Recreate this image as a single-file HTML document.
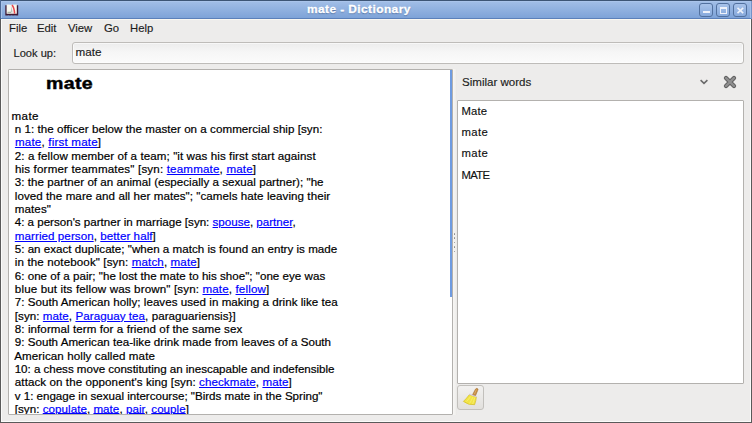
<!DOCTYPE html>
<html><head><meta charset="utf-8">
<style>
*{margin:0;padding:0;box-sizing:border-box}
html,body{width:752px;height:423px;overflow:hidden;background:#edeceb;font-family:"Liberation Sans",sans-serif;color:#1a1a1a}
.abs{position:absolute}
#frame{position:absolute;left:0;top:0;width:752px;height:423px;border-left:1px solid #5a5a5a;border-right:1px solid #5a5a5a;border-bottom:1px solid #5a5a5a;border-top:1px solid #3d5575;box-shadow:inset 1px 0 #fbfbfa,inset -1px 0 #fbfbfa,inset 0 -1px #fbfbfa}
#title{position:absolute;left:1px;top:1px;width:750px;height:18px;background:linear-gradient(#b3cbef 0,#a0bde6 1px,#7ea3d8 100%);border-bottom:1px solid #5b80ba;box-shadow:inset 1px 0 #a9c3ea,inset -1px 0 #a4bfe8}
#tl{position:absolute;left:0;top:0;width:1px;height:19px;background:#4d6a96}
#tr{position:absolute;left:751px;top:1px;width:1px;height:18px;background:#7193c8}
#title .t{position:absolute;left:306px;top:2px;color:#fff;font-weight:bold;font-size:10.9px;letter-spacing:0.4px;-webkit-text-stroke:0.3px #fff;text-shadow:0 1px 1px rgba(40,70,120,.6);transform:scaleX(1.09);transform-origin:0 0;white-space:nowrap}
.wb{position:absolute;top:2px;width:14px;height:14px;border:1px solid #52719f;border-radius:3px;background:linear-gradient(#a8c3ea,#86a9dc)}
#menu{position:absolute;left:2px;top:19px;width:748px;height:19px;border-top:1px solid #f9f7f1}
#menu span{position:absolute;top:1.6px;font-size:11.3px;color:#1c1c1c;-webkit-text-stroke:0.15px #1c1c1c}
.lbl{font-size:11.3px;color:#1c1c1c;-webkit-text-stroke:0.15px #1c1c1c}
#entry{position:absolute;left:72px;top:42px;width:672px;height:22px;border:1px solid #bebcb9;border-radius:3px;background:linear-gradient(#ececec,#f6f6f6 45%,#fbfbfb);box-shadow:inset 0 0 0 1px rgba(255,255,255,.6)}
#def{position:absolute;left:8px;top:69px;width:445px;height:346px;background:#fff;border:1px solid #b3b1ae;overflow:hidden;border-radius:1px}
#defblue{position:absolute;left:450px;top:70px;width:2px;height:227px;background:#6f9be0}
#handle{position:absolute;left:453px;top:69px;width:4px;height:346px;background:linear-gradient(90deg,#f7f6f4,#f1f0ee 60%,#e9e8e6)}
.dot{position:absolute;left:453.8px;width:1.5px;height:1.5px;background:#8a8a8a;border-radius:0.75px}
#deftxt{position:absolute;left:2.5px;top:38.7px;font-size:11.6px;line-height:13.33px;white-space:pre;color:#000;letter-spacing:0.03px;-webkit-text-stroke:0.2px #000}
.u a{text-underline-offset:0.4px}
#deftxt a{color:#0000ff;-webkit-text-stroke:0.2px #0000ff;text-decoration:underline}
#head{position:absolute;left:37.3px;top:3.7px;font-size:17px;font-weight:bold;color:#000;letter-spacing:0.3px;-webkit-text-stroke:0.45px #000;transform:scaleX(1.15);transform-origin:0 0}
#list{position:absolute;left:457px;top:100px;width:287px;height:284px;background:#fff;border:1px solid #b3b1ae;border-radius:1px}
#list div{position:absolute;left:3.5px;font-size:11.3px;color:#111;-webkit-text-stroke:0.15px #111}
#broom{position:absolute;left:457px;top:385px;width:27px;height:25px;border:1px solid #c2c0bc;border-radius:3px;background:linear-gradient(#f2f1f0,#e2e0dd)}
/*ls:0.4,0.0406,0.1875,0.08,0.1667,0.0296,0.06,0.08,-0.0073,0.0666,0.01,0.1118,0.0164,0.1348,0.0322,0.0584,0.0728,0.0203,0.088,-0.0299,0.0784,-0.0134,0.041*/
</style></head><body>
<div id="frame"></div>
<div id="tl"></div>
<div id="tr"></div>
<div id="title">
  <svg class="abs" style="left:0;top:0" width="24" height="18" viewBox="0 0 24 18">
    <path d="M4.3 4.2 L17.2 4.2 L17.2 14.4 Q15.5 14.8 14 14.3 Q12.3 14.8 10.7 14.3 Q9 14.8 7.4 14.3 Q5.8 14.8 4.3 14.4 Z" fill="#3e1a36"/>
    <path d="M5.6 3.6 Q8 3.1 10.7 3.8 Q13.4 3.1 15.8 3.6 L15.8 12.7 L5.6 12.7 Z" fill="#f8f7ef"/>
    <path d="M10.5 5 L9.7 11.4 L11.6 11.4 Z" fill="#b9c2c0"/>
    <path d="M6.5 11.3 L10 11.3" stroke="#8f9e88" stroke-width="0.9"/>
    <path d="M11 3.9 Q13.3 6.5 13.6 12.6" stroke="#e8484e" stroke-width="1.5" fill="none"/>
  </svg>
  <div class="t">mate - Dictionary</div>
  <div class="wb" style="left:698px"><div class="abs" style="left:3px;top:7px;width:7px;height:2px;background:#eef2fa"></div></div>
  <div class="wb" style="left:715px"><div class="abs" style="left:3px;top:2.5px;width:6.5px;height:7px;border:1px solid #eef2fa;border-top-width:2px"></div></div>
  <div class="wb" style="left:732px"><svg class="abs" style="left:2px;top:2px" width="9" height="9" viewBox="0 0 9 9"><path d="M1.5 1.8L7.2 7.2M7.2 1.8L1.5 7.2" stroke="#eef2fa" stroke-width="1.6"/></svg></div>
</div>
<div id="menu">
  <span style="left:7px">File</span>
  <span style="left:35px">Edit</span>
  <span style="left:66px">View</span>
  <span style="left:102px">Go</span>
  <span style="left:128px">Help</span>
</div>
<div class="abs lbl" style="left:13.5px;top:46.8px;font-size:11.1px">Look up:</div>
<div id="entry"><div class="abs lbl" style="left:2.5px;top:2.4px;font-size:11.7px">mate</div></div>

<div id="def">
  <div id="head">mate</div>
<div id="deftxt"><span class="l" style="letter-spacing:0.4000px">mate</span>
<span class="l" style="letter-spacing:0.0406px"> n 1: the officer below the master on a commercial ship [syn:</span>
<span class="l" style="letter-spacing:0.1875px"> <a>mate</a>, <a>first mate</a>]</span>
<span class="l" style="letter-spacing:0.0800px"> 2: a fellow member of a team; "it was his first start against</span>
<span class="l" style="letter-spacing:0.1667px"> his former teammates" [syn: <a>teammate</a>, <a>mate</a>]</span>
<span class="l" style="letter-spacing:0.0296px"> 3: the partner of an animal (especially a sexual partner); "he</span>
<span class="l" style="letter-spacing:0.0600px"> loved the mare and all her mates"; "camels hate leaving their</span>
<span class="l" style="letter-spacing:0.0800px"> mates"</span>
<span class="l" style="letter-spacing:-0.0073px"> 4: a person's partner in marriage [syn: <a>spouse</a>, <a>partner</a>,</span>
<span class="l" style="letter-spacing:0.0666px"> <a>married person</a>, <a>better half</a>]</span>
<span class="l" style="letter-spacing:0.0100px"> 5: an exact duplicate; "when a match is found an entry is made</span>
<span class="l" style="letter-spacing:0.1118px"> in the notebook" [syn: <a>match</a>, <a>mate</a>]</span>
<span class="l" style="letter-spacing:0.0164px"> 6: one of a pair; "he lost the mate to his shoe"; "one eye was</span>
<span class="l" style="letter-spacing:0.1348px"> blue but its fellow was brown" [syn: <a>mate</a>, <a>fellow</a>]</span>
<span class="l" style="letter-spacing:0.0322px"> 7: South American holly; leaves used in making a drink like tea</span>
<span class="l" style="letter-spacing:0.0584px"> [syn: <a>mate</a>, <a>Paraguay tea</a>, paraguariensis}]</span>
<span class="l" style="letter-spacing:0.0728px"> 8: informal term for a friend of the same sex</span>
<span class="l" style="letter-spacing:0.0203px"> 9: South American tea-like drink made from leaves of a South</span>
<span class="l" style="letter-spacing:0.0880px"> American holly called mate</span>
<span class="l" style="letter-spacing:-0.0299px"> 10: a chess move constituting an inescapable and indefensible</span>
<span class="l" style="letter-spacing:0.0784px"> attack on the opponent's king [syn: <a>checkmate</a>, <a>mate</a>]</span>
<span class="l" style="letter-spacing:-0.0134px"> v 1: engage in sexual intercourse; "Birds mate in the Spring"</span>
<span class="l u" style="letter-spacing:0.0410px"> [syn: <a>copulate</a>, <a>mate</a>, <a>pair</a>, <a>couple</a>]</span></div>
</div>
<div id="defblue"></div>
<div id="handle"></div>
<div class="dot" style="top:233px"></div>
<div class="dot" style="top:237.4px"></div>
<div class="dot" style="top:241.8px"></div>
<div class="dot" style="top:246.2px"></div>
<div class="dot" style="top:250.6px"></div>

<div class="abs lbl" style="left:462px;top:75.6px;font-size:11.55px">Similar words</div>
<svg class="abs" style="left:699px;top:78px" width="10" height="8" viewBox="0 0 10 8"><path d="M1.6 2.2 L5 5.4 L8.4 2.2" stroke="#6a6a6a" stroke-width="1.6" fill="none"/></svg>
<svg class="abs" style="left:722px;top:74px" width="16" height="16" viewBox="0 0 16 16">
  <path d="M4 4 L12 12 M12 4 L4 12" stroke="#606060" stroke-width="4.3" stroke-linecap="round"/>
  <path d="M4 4 L12 12 M12 4 L4 12" stroke="#909090" stroke-width="2.3" stroke-linecap="round"/>
</svg>
<div id="list">
  <div style="top:4px;letter-spacing:0.1px">Mate</div>
  <div style="top:25.1px;letter-spacing:0.4px">mate</div>
  <div style="top:46.4px;letter-spacing:0.4px">mate</div>
  <div style="top:67.7px;letter-spacing:-0.7px">MATE</div>
</div>
<div id="broom"></div>
<svg class="abs" style="left:457px;top:385px" width="27" height="25" viewBox="457 385 27 25">
  <path d="M469.4 394.6 Q466.5 398.5 463.4 401.4 Q468 405.2 474.6 404.7 Q476.2 400.5 476.4 396.8 Z" fill="#f2e444" stroke="#cbb626" stroke-width="0.6"/>
  <path d="M466.5 401.5 Q469 399 470.5 396.5 M469.5 403.6 Q471.5 400.5 472.8 397.2 M472.6 404 Q473.8 401 474.6 397.8" stroke="#fbf49a" stroke-width="0.6" fill="none" opacity="0.8"/>
  <path d="M469.6 393.6 L476.8 396.2 L476.4 397.2 L469.3 394.7 Z" fill="#d6cdec"/>
  <path d="M472.6 394.6 L475.4 389.2 Q476.8 387.6 478 389 Q478.2 389.6 477.8 390.2 L475.6 395.6 Z" fill="#c68c44" stroke="#9c6a2e" stroke-width="0.5"/>
  <path d="M474.4 394.2 L476.4 389.6" stroke="#e8c080" stroke-width="0.6"/>
</svg>
</body></html>
